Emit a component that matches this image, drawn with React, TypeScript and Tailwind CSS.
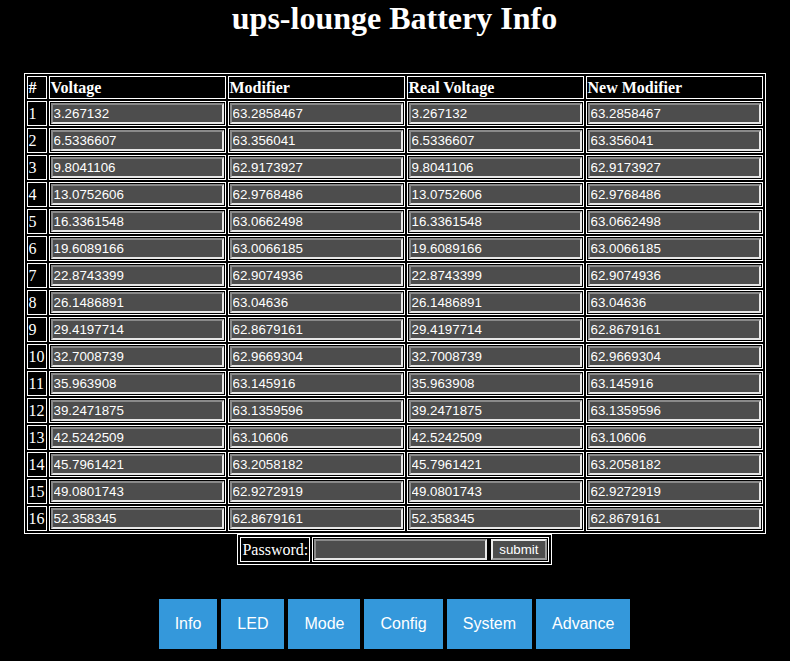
// App.tsx — ups-lounge battery info page (voltage / modifier table)

const ROWS: [string, string][] = [
  ["3.267132", "63.2858467"],
  ["6.5336607", "63.356041"],
  ["9.8041106", "62.9173927"],
  ["13.0752606", "62.9768486"],
  ["16.3361548", "63.0662498"],
  ["19.6089166", "63.0066185"],
  ["22.8743399", "62.9074936"],
  ["26.1486891", "63.04636"],
  ["29.4197714", "62.8679161"],
  ["32.7008739", "62.9669304"],
  ["35.963908", "63.145916"],
  ["39.2471875", "63.1359596"],
  ["42.5242509", "63.10606"],
  ["45.7961421", "63.2058182"],
  ["49.0801743", "62.9272919"],
  ["52.358345", "62.8679161"],
];

const NAV = ["Info", "LED", "Mode", "Config", "System", "Advance"];

const inputCls =
  "block w-[173px] h-[21px] px-[1px] py-[1px] bg-[#4d4d4d] text-white text-[13.33px] leading-[15px] font-['Liberation_Sans',Arial,sans-serif] border-2 border-t-[#8a8a8a] border-l-[#8a8a8a] border-b-[#e6e6e6] border-r-[#e6e6e6] outline-none";

function Field({ value }: { value: string }) {
  return <input type="text" defaultValue={value} className={inputCls} />;
}

export default function App() {
  return (
    <div className="min-h-[661px] pr-[1px] bg-black text-white font-['Liberation_Serif','Times_New_Roman',serif]">
      <h1 className="m-0 text-center text-[32px] font-bold leading-[36px]">ups-lounge Battery Info</h1>

      <div className="pt-[37px] flex flex-col items-center">
        <table className="border border-white border-separate border-spacing-[2px] text-[16px]">
          <thead>
            <tr>
              {["#", "Voltage", "Modifier", "Real Voltage", "New Modifier"].map((h) => (
                <th key={h} className="border border-white p-[1px] text-left font-bold leading-[19px]">
                  {h}
                </th>
              ))}
            </tr>
          </thead>
          <tbody>
            {ROWS.map(([v, m], i) => (
              <tr key={i}>
                <td className="border border-white p-[1px] leading-[19px]">{i + 1}</td>
                <td className="border border-white p-[1px]"><Field value={v} /></td>
                <td className="border border-white p-[1px]"><Field value={m} /></td>
                <td className="border border-white p-[1px]"><Field value={v} /></td>
                <td className="border border-white p-[1px]"><Field value={m} /></td>
              </tr>
            ))}
          </tbody>
        </table>

        {/* Password */}
        <table className="border border-white border-separate border-spacing-[2px] text-[16px]">
          <tbody>
            <tr>
              <td className="border border-white p-[1px] leading-[19px]">Password:</td>
              <td className="border border-white p-[1px]">
                <div className="flex items-center gap-1">
                  <input type="password" className={inputCls} />
                  <button className="h-[21px] px-[6px] bg-[#4d4d4d] text-white text-[13.33px] leading-[15px] font-['Liberation_Sans',Arial,sans-serif] border-2 border-t-[#ececec] border-l-[#ececec] border-b-[#9a9a9a] border-r-[#9a9a9a]">
                    submit
                  </button>
                </div>
              </td>
            </tr>
          </tbody>
        </table>

        {/* Nav */}
        <div className="mt-[34px] flex gap-1 justify-center font-['Liberation_Sans',Arial,sans-serif]">
          {NAV.map((n) => (
            <button key={n} className="px-4 py-4 bg-[#3498db] text-white text-[16px] leading-[18px]">
              {n}
            </button>
          ))}
        </div>
      </div>
    </div>
  );
}
